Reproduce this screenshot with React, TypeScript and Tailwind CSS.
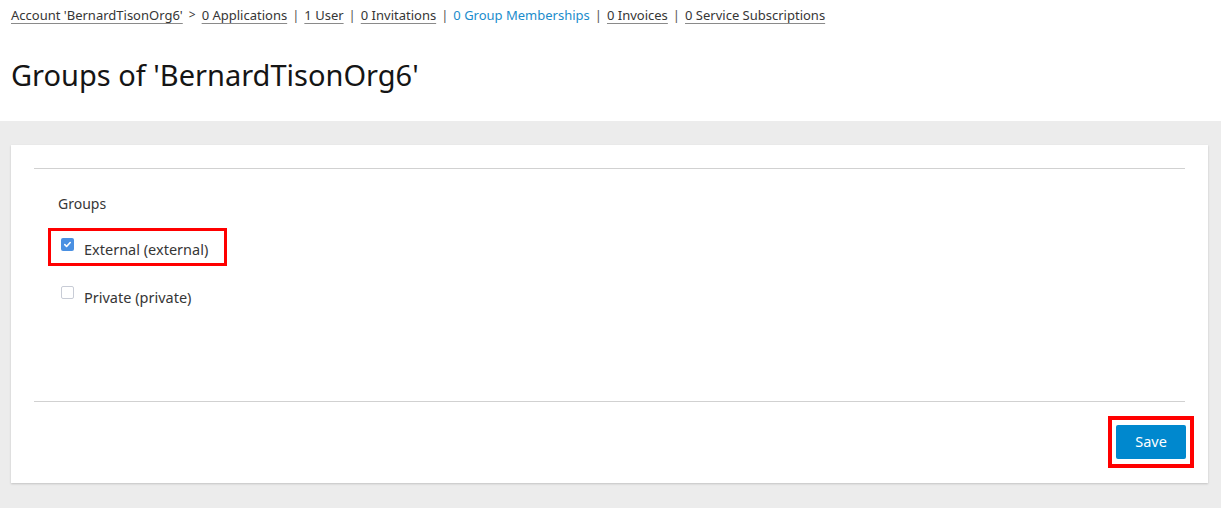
import React from 'react';

const links = [
  { label: '0 Applications' },
  { label: '1 User' },
  { label: '0 Invitations' },
  { label: '0 Group Memberships', active: true },
  { label: '0 Invoices' },
  { label: '0 Service Subscriptions' },
];

const groups = [
  { id: 'external', label: 'External (external)', checked: true, highlight: true },
  { id: 'private', label: 'Private (private)', checked: false, highlight: false },
];

const CheckBox: React.FC<{ checked: boolean }> = ({ checked }) =>
  checked ? (
    <span className="flex h-[13px] w-[13px] items-center justify-center rounded-[2px] bg-[#4a90e2]">
      <svg width="9" height="9" viewBox="0 0 10 10" fill="none">
        <path d="M2 5.2l2 2 4-4.4" stroke="#fff" strokeWidth="1.8" strokeLinecap="round" strokeLinejoin="round" />
      </svg>
    </span>
  ) : (
    <span className="block h-[13px] w-[13px] rounded-[2px] border border-[#c8ccd6] bg-white" />
  );

export default function App() {
  return (
    <div className="h-[508px] w-[1221px] bg-[#ececec] font-['Noto_Sans','Liberation_Sans',sans-serif] text-[#363636]">
      {/* Header */}
      <div className="h-[121px] bg-white px-[11px]">
        <nav className="flex items-center pt-[5px] text-[13px] leading-[20px]">
          <a className="underline decoration-[#8a8a8a] underline-offset-[3px]">Account 'BernardTisonOrg6'</a>
          <span className="mx-[6px] text-[12px]">&gt;</span>
          {links.map((link, i) => (
            <React.Fragment key={link.label}>
              {i > 0 && <span className="mx-[5px] text-[#555]">|</span>}
              {link.active ? (
                <a className="text-[#1b8ccc]">{link.label}</a>
              ) : (
                <a className="underline decoration-[#8a8a8a] underline-offset-[3px]">{link.label}</a>
              )}
            </React.Fragment>
          ))}
        </nav>
        <h1 className="mt-[32px] text-[29px] leading-[36px] font-normal text-[#151515]">
          Groups of 'BernardTisonOrg6'
        </h1>
      </div>

      {/* Card */}
      <div className="px-[11px] pt-[24px] pr-[13px]">
        <div className="h-[338px] bg-white px-[23px] pt-[23px] shadow-[0_1px_2px_rgba(0,0,0,0.18)]">
          <div className="border-t border-[#d1d1d1]" />
          <div className="h-[232px] px-[24px] pt-[24px]">
            <div className="text-[14px] leading-[22px]">Groups</div>
            <div className="mt-[13px] flex flex-col gap-[10px]">
              {groups.map((g) => (
                <label
                  key={g.id}
                  className={`-ml-[10px] flex h-[38px] items-center gap-[10px] pl-[10px] pr-[16px] ${
                    g.highlight ? 'w-fit border-[3px] border-[#ff0000]' : 'border-[3px] border-transparent'
                  }`}
                >
                  <span className="-mt-[5px]"><CheckBox checked={g.checked} /></span>
                  <span className="mt-[3px] text-[14.5px] leading-[20px]">{g.label}</span>
                </label>
              ))}
            </div>
          </div>
          <div className="border-t border-[#d1d1d1]" />
          <div className="flex justify-end pt-[14px] -mr-[9px]">
            <div className="border-[4px] border-[#ff0000] px-[4px] py-[5px]">
              <button className="h-[34px] w-[70px] rounded-[2px] bg-[#0088ce] text-[14.5px] text-white">Save</button>
            </div>
          </div>
        </div>
      </div>
    </div>
  );
}
